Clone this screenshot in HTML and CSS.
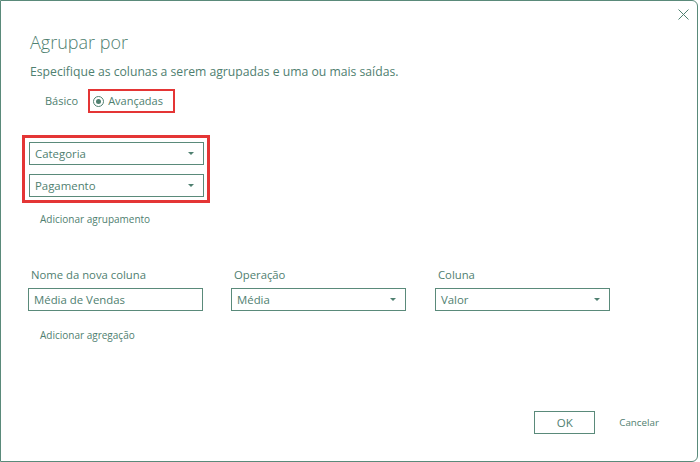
FILE: index.html
```html
<!DOCTYPE html>
<html lang="pt">
<head>
<meta charset="utf-8">
<link rel="stylesheet" href="styles.css">
</head>
<body>
<div class="dialog">
  <button class="close" aria-label="Fechar">
    <svg width="11" height="11" viewBox="0 0 11 11"><path d="M0.5 0.5 L10.5 10.5 M10.5 0.5 L0.5 10.5" stroke="#4f8070" stroke-width="1" fill="none"/></svg>
  </button>
  <h1 class="title">Agrupar por</h1>
  <p class="subtitle">Especifique as colunas a serem agrupadas e uma ou mais saídas.</p>
  <div class="modes">
    <span class="mode">Básico</span>
    <span class="mode selected"><span class="radio"><span class="dot"></span></span>Avançadas</span>
  </div>
  <div class="groups">
    <div class="select"><span>Categoria</span><span class="arrow"></span></div>
    <div class="select"><span>Pagamento</span><span class="arrow"></span></div>
  </div>
  <div class="link">Adicionar agrupamento</div>
  <div class="agg">
    <div class="field">
      <label>Nome da nova coluna</label>
      <div class="input">Média de Vendas</div>
    </div>
    <div class="field">
      <label>Operação</label>
      <div class="select"><span>Média</span><span class="arrow"></span></div>
    </div>
    <div class="field last">
      <label>Coluna</label>
      <div class="select"><span>Valor</span><span class="arrow"></span></div>
    </div>
  </div>
  <div class="link">Adicionar agregação</div>
  <div class="footer">
    <button class="btn ok">OK</button>
    <button class="btn cancel">Cancelar</button>
  </div>
</div>
</body>
</html>
```
FILE: styles.css
```css
html, body {
  margin: 0;
  padding: 0;
  background: #ffffff;
}
body {
  width: 700px;
  height: 462px;
  font-family: "Open Sans", "Noto Sans", sans-serif;
  color: #4f8070;
}
.dialog {
  position: relative;
  box-sizing: border-box;
  width: 698px;
  height: 462px;
  border: 1px solid #5a8a7a;
  border-radius: 0 6px 6px 0;
  padding: 0 0 0 29px;
  display: flex;
  flex-direction: column;
}
.close {
  position: absolute;
  right: 8px;
  top: 8px;
  width: 11px;
  height: 11px;
  padding: 0;
  border: 0;
  background: none;
  line-height: 0;
}
.title {
  margin: 27px 0 0 0;
  font-size: 18px;
  font-weight: 300;
  line-height: 28px;
}
.subtitle {
  margin: 7px 0 0 0;
  font-size: 12.2px;
  line-height: 18px;
}
.modes {
  margin: 8px 0 0 -9px;
  display: flex;
  align-items: center;
}
.mode {
  font-size: 11px;
  line-height: 16px;
  padding: 0 0 0 24px;
}
.mode.selected {
  margin-left: 10px;
  padding: 2px 10px 2px 3px;
  border: 2px solid #e43535;
  display: flex;
  align-items: center;
  gap: 4px;
}
.radio {
  width: 9px;
  height: 9px;
  border: 1px solid #4f8070;
  border-radius: 50%;
  display: flex;
  align-items: center;
  justify-content: center;
}
.dot {
  width: 5px;
  height: 5px;
  background: #4f8070;
  border-radius: 50%;
}
.groups {
  margin: 22px 0 0 -8px;
  width: 175px;
  padding: 4px 3px 3px 4px;
  border: 3px solid #e43535;
  display: flex;
  flex-direction: column;
  gap: 9px;
}
.select, .input {
  box-sizing: border-box;
  width: 175px;
  height: 23px;
  border: 1px solid #5a8a7a;
  display: flex;
  align-items: center;
  justify-content: space-between;
  padding: 0 9px 0 5px;
  font-size: 11.4px;
}
.arrow {
  width: 0;
  height: 0;
  border-left: 3px solid transparent;
  border-right: 3px solid transparent;
  border-top: 3px solid #4f8070;
}
.link {
  margin: 8px 0 0 10px;
  font-size: 10px;
  line-height: 16px;
}
.agg {
  margin-top: 39px;
  display: flex;
  gap: 28px;
  margin-left: -2px;
}
.field {
  display: flex;
  flex-direction: column;
  width: 175px;
}
.field.last {
  margin-left: 1px;
}
.field label {
  font-size: 11.3px;
  line-height: 17px;
  padding-left: 3px;
  margin-bottom: 5px;
}
.agg + .link {
  margin-top: 16px;
}
.footer {
  margin-top: auto;
  margin-bottom: 27px;
  display: flex;
  justify-content: flex-end;
  align-items: center;
  padding-right: 38px;
  gap: 24px;
}
.btn {
  font-family: inherit;
  color: #4f8070;
  background: #fff;
  font-size: 11.5px;
  padding: 0;
}
.ok {
  width: 61px;
  height: 23px;
  border: 1px solid #5a8a7a;
}
.cancel {
  border: 0;
  font-size: 9.8px;
}
```
